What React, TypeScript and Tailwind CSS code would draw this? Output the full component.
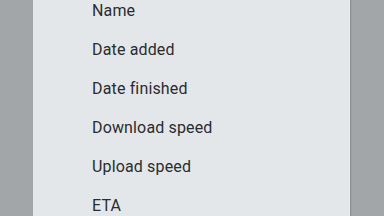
const OPTIONS = ["Name", "Date added", "Date finished", "Download speed", "Upload speed", "ETA"];

export default function App() {
  return (
    <div className="w-[384px] h-[216px] overflow-hidden bg-[#a3a6a9] pl-[33px] flex">
      <div className="w-[317px] h-full bg-[#e4e7ea] border-r border-[#eef0f2] shadow-[1px_0_1px_rgba(0,0,0,0.15)] overflow-hidden">
        <ul className="-mt-[9px]" style={{ fontFamily: "Roboto, sans-serif" }}>
          {OPTIONS.map((o) => (
            <li key={o} className="h-[39px] flex items-center pl-[59px] text-[16px] leading-6 text-[#2a2c2e] tracking-[0.15px]">
              {o}
            </li>
          ))}
        </ul>
      </div>
    </div>
  );
}
